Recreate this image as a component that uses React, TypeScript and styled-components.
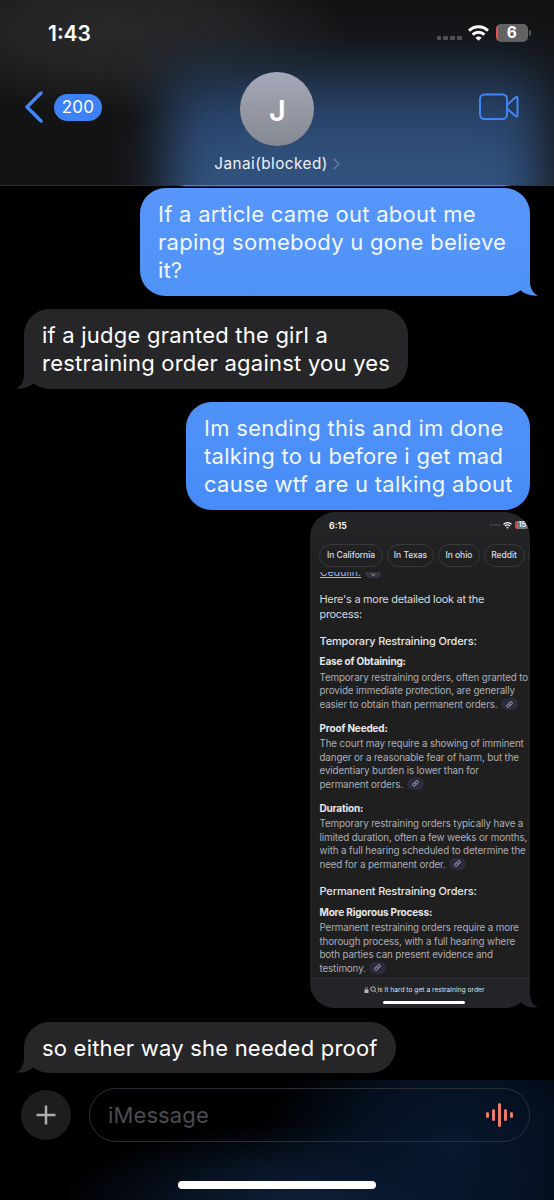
import React from 'react';
import styled, { createGlobalStyle, css } from 'styled-components';

const GlobalStyle = createGlobalStyle`
  * { box-sizing: border-box; }
  body { margin: 0; background: #000; }
`;

const Phone = styled.main`
  width: 554px;
  height: 1200px;
  overflow: hidden;
  display: flex;
  flex-direction: column;
  background: #000;
  color: #fff;
  font-family: Inter, "Liberation Sans", sans-serif;
`;

const Header = styled.header`
  position: relative;
  isolation: isolate;
  flex: none;
  height: 186px;
  overflow: hidden;
  border-bottom: 1px solid;
  border-image: linear-gradient(90deg, #2b2c2e 0 178px, #5286d0 186px 503px, #2b3443 511px) 1;
  background:
    radial-gradient(ellipse 230px 85px at 120px 30px, #29292a 0%, rgba(41, 41, 42, 0.75) 45%, rgba(41, 41, 42, 0) 100%),
    #131314;
`;

const HeaderGlow = styled.div`
  position: absolute;
  z-index: -1;
  left: 166px;
  top: 62px;
  width: 378px;
  height: 240px;
  background: linear-gradient(#1b2a3d, #263f61 16%, #2e4c78 32%, #33547f 50%, #345588);
  filter: blur(26px);
`;

const StatusBar = styled.div`
  display: flex;
  align-items: center;
  justify-content: space-between;
  height: 66px;
  padding: 2px 23px 0 48px;
`;

const Clock = styled.span`
  font-size: 21px;
  font-weight: 600;
  margin-bottom: 1px;
`;

const StatusIcons = styled.div`
  display: flex;
  align-items: center;
  margin-bottom: 2px;
`;

const NavRow = styled.div`
  display: grid;
  grid-template-columns: 1fr auto 1fr;
  height: 119px;
  padding: 0 35px;
`;

const BackButton = styled.div`
  display: flex;
  align-items: center;
  gap: 11px;
  height: 82px;
  margin-left: -10px;
`;

const CountPill = styled.span`
  width: 48px;
  height: 27px;
  border-radius: 14px;
  background: #3c82f6;
  font-size: 17px;
  line-height: 27px;
  text-align: center;
  letter-spacing: 0.2px;
`;

const Contact = styled.div`
  display: flex;
  flex-direction: column;
  align-items: center;
  padding-top: 6px;
`;

const Avatar = styled.div`
  width: 74px;
  height: 74px;
  margin-left: 1px;
  border-radius: 50%;
  background: linear-gradient(#a5a9b8, #868991);
  font-size: 29px;
  font-weight: 600;
  line-height: 77px;
  text-align: center;
`;

const ContactName = styled.div`
  display: flex;
  align-items: center;
  gap: 5px;
  margin-top: 8px;
  font-size: 15.3px;
  line-height: 19px;
  letter-spacing: 0.46px;
  color: #eef2f8;
`;

const VideoButton = styled.div`
  display: flex;
  justify-content: flex-end;
  align-items: center;
  height: 82px;
`;

const Thread = styled.section`
  flex: none;
  height: 894px;
  display: flex;
  flex-direction: column;
  padding: 0 24px;
`;

const PeekEdge = styled.div`
  flex: none;
  width: 322px;
  height: 1px;
  margin: 0 0 1px 159px;
  background: #0a2350;
`;

const Bubble = styled.div<{ $own?: boolean; $width: number; $gap?: number; $from?: string; $to?: string }>`
  position: relative;
  flex: none;
  width: ${(p) => p.$width}px;
  margin-bottom: ${(p) => p.$gap ?? 13.5}px;
  padding: 11.8px 0 11.8px 18px;
  border-radius: 25.5px;
  font-size: 22px;
  line-height: 28px;
  white-space: nowrap;
  ${(p) =>
    p.$own
      ? css`
          align-self: flex-end;
          background: linear-gradient(${p.$from}, ${p.$to});
          color: #f2f7ff;
        `
      : css`
          align-self: flex-start;
          background: #262629;
        `}
`;

const Line = styled.span<{ $track?: number }>`
  display: block;
  letter-spacing: ${(p) => (p.$track === undefined ? 'inherit' : `${p.$track}px`)};
`;

const TailSvg = styled.svg<{ $side: 'left' | 'right' }>`
  position: absolute;
  bottom: 0;
  width: 24px;
  height: 30px;
  ${(p) => (p.$side === 'right' ? 'right: -8px;' : 'left: -8px; transform: scaleX(-1);')}
`;

const Tail = ({ side, color }: { side: 'left' | 'right'; color: string }) => (
  <TailSvg $side={side} viewBox="0 0 24 30">
    <path d="M6 4 L16 4 V15 C16 22 18.5 27 24 29.6 C17 30.2 11 28 7 24.8 L2 20 Z" fill={color} />
  </TailSvg>
);

const Attachment = styled.div`
  position: relative;
  flex: none;
  align-self: flex-end;
  width: 220px;
  height: 496.5px;
  margin-bottom: 13.5px;
`;

const Shot = styled.div`
  display: flex;
  flex-direction: column;
  width: 220px;
  height: 496.5px;
  overflow: hidden;
  border-radius: 25px;
  background: linear-gradient(#242528, #1f1f1f 60px, #1f1f1f);
  white-space: nowrap;
`;

const ShotStatus = styled.div`
  display: flex;
  justify-content: space-between;
  align-items: center;
  flex: none;
  height: 32px;
  padding: 0 2px 5px 19px;
  font-size: 8.8px;
  font-weight: 600;
`;

const ShotStatusIcons = styled.div`
  display: flex;
  align-items: center;
  gap: 3px;
`;

const ShotBattery = styled.span`
  flex: none;
  width: 13px;
  height: 8px;
  border-left: 2px solid #d8433d;
  border-radius: 2px;
  background: #77777a;
  font-size: 7px;
  line-height: 8px;
  text-align: center;
`;

const Chips = styled.div`
  display: flex;
  flex: none;
  gap: 3.7px;
  height: 23px;
  margin-left: 9px;
`;

const Chip = styled.span<{ $width: number }>`
  flex: none;
  width: ${(p) => p.$width}px;
  border: 1px solid #38393c;
  border-radius: 12px;
  font-size: 8.5px;
  font-weight: 500;
  line-height: 21px;
  letter-spacing: -0.04px;
  text-align: center;
  color: #dcdde0;
`;

const CutRow = styled.div`
  display: flex;
  align-items: flex-end;
  flex: none;
  gap: 4px;
  height: 6px;
  margin: 5px 0 0 10px;
  overflow: hidden;
  font-size: 10.3px;
  line-height: 11px;
  color: #a8b9e8;
`;

const CutLink = styled.span`
  text-decoration: underline;
  text-decoration-thickness: 1px;
  letter-spacing: 0.15px;
`;

const CutBadge = styled.span`
  width: 16px;
  height: 11px;
  border-radius: 6px;
  background: #33343f;
  font-size: 7px;
  line-height: 13px;
  text-align: center;
  color: #b8b9c6;
`;

const Article = styled.article`
  flex: none;
  height: 400px;
  padding: 14.5px 0 0 9.5px;
  font-size: 9.8px;
  line-height: 13.45px;
  letter-spacing: -0.13px;
  color: #adaeb8;
`;

const Intro = styled.p`
  margin: 0 0 12.1px;
  font-size: 10.9px;
  line-height: 14.7px;
  letter-spacing: -0.25px;
  color: #d9dadd;
`;

const Title = styled.h2`
  margin: 0 0 6.5px;
  font-size: 11px;
  font-weight: 500;
  line-height: 15px;
  letter-spacing: -0.15px;
  color: #e6e7ea;
`;

const Subtitle = styled.h3`
  margin: 0 0 2.1px;
  font-size: 10px;
  font-weight: 700;
  line-height: 13.4px;
  letter-spacing: -0.17px;
  color: #e8e9ec;
`;

const Paragraph = styled.p<{ $gap?: number }>`
  margin: 0 0 ${(p) => p.$gap ?? 10.6}px;
`;

const LinkBadge = styled.span`
  display: inline-flex;
  align-items: center;
  justify-content: center;
  vertical-align: middle;
  width: 17px;
  height: 12px;
  margin: -2px 0 0 1px;
  border-radius: 6px;
  background: #2c2c3c;
`;

const SearchFooter = styled.div`
  flex: 1;
  display: flex;
  flex-direction: column;
  align-items: center;
  padding-left: 8px;
  border-top: 1px solid #2e2f33;
  background: #232427;
`;

const SearchText = styled.div`
  display: flex;
  align-items: center;
  gap: 1px;
  margin: 5px 0;
  font-size: 6.7px;
  line-height: 12px;
  color: #dfe0e4;
`;

const HomeBar = styled.div<{ $width: number; $height: number }>`
  width: ${(p) => p.$width}px;
  height: ${(p) => p.$height}px;
  border-radius: ${(p) => p.$height / 2}px;
  background: #fff;
`;

const Composer = styled.footer`
  flex: none;
  height: 120px;
  overflow: hidden;
  display: flex;
  flex-direction: column;
  align-items: center;
  background:
    radial-gradient(ellipse 190px 140px at 455px 60px, rgba(8, 26, 52, 0.9) 0%, rgba(7, 22, 44, 0.7) 50%, rgba(0, 0, 0, 0) 100%),
    radial-gradient(ellipse 270px 85px at 330px 125px, #11233f 0%, rgba(12, 28, 52, 0.7) 50%, rgba(0, 0, 0, 0) 100%),
    #000;
`;

const InputRow = styled.div`
  display: flex;
  align-items: center;
  gap: 18px;
  width: 100%;
  padding: 8px 24px 0 21px;
`;

const PlusButton = styled.div`
  display: flex;
  align-items: center;
  justify-content: center;
  width: 50px;
  height: 50px;
  border-radius: 50%;
  background: #1d1d1f;
`;

const InputBox = styled.div`
  flex: 1;
  display: flex;
  align-items: center;
  justify-content: space-between;
  height: 54px;
  padding: 0 16px 0 18px;
  border: 1px solid #2a2f36;
  border-radius: 27px;
  font-size: 22px;
  letter-spacing: 0.12px;
  color: #4b4c50;
`;

const HomeSlot = styled.div`
  margin-top: 39px;
`;

const LinkIcon = () => (
  <svg width="7" height="7" viewBox="0 0 24 24" fill="none" stroke="#b4b5c6" strokeWidth="3" strokeLinecap="round">
    <path d="M10 13a5 5 0 0 0 7.5.5l3-3a5 5 0 0 0-7-7l-1.7 1.7" />
    <path d="M14 11a5 5 0 0 0-7.5-.5l-3 3a5 5 0 0 0 7 7l1.7-1.7" />
  </svg>
);

const Badge = () => (
  <LinkBadge>
    <LinkIcon />
  </LinkBadge>
);

const Wifi = ({ width }: { width: number }) => (
  <svg width={width} height={width * 0.76} viewBox="0 0 21 16" fill="none" stroke="#fff" strokeWidth="3">
    <path d="M1 5.6 C6.5 0.4 14.5 0.4 20 5.6" />
    <path d="M4.6 9.6 C8 6.5 13 6.5 16.4 9.6" />
    <path d="M10.5 15.8 L7.4 12.8 C9.2 11.2 11.8 11.2 13.6 12.8 Z" fill="#fff" stroke="none" />
  </svg>
);

const SignalDots = styled.div<{ $size: number; $space: number }>`
  display: flex;
  gap: ${(p) => p.$space}px;
  i {
    width: ${(p) => p.$size}px;
    height: ${(p) => p.$size}px;
    border-radius: 1px;
    background: #505154;
  }
`;

const MainDots = styled(SignalDots)`
  margin: 10px 6px 0 0;
`;

const Dots = () => (
  <>
    <i />
    <i />
    <i />
    <i />
  </>
);

const Battery = styled.div`
  position: relative;
  width: 32.5px;
  height: 18px;
  margin: 0 3px 0 7px;
  border-radius: 5px;
  background: linear-gradient(90deg, #e8504c 2.5px, #626265 2.5px);
  font-size: 15.5px;
  font-weight: 700;
  line-height: 18.5px;
  text-align: center;
  &::after {
    content: '';
    position: absolute;
    right: -3px;
    top: 6px;
    width: 2px;
    height: 6px;
    border-radius: 0 2px 2px 0;
    background: #55565a;
  }
`;

export default function App() {
  return (
    <Phone>
      <GlobalStyle />
      <Header>
        <HeaderGlow />
        <StatusBar>
          <Clock>1:43</Clock>
          <StatusIcons>
            <MainDots $size={4.6} $space={2.2}>
              <Dots />
            </MainDots>
            <Wifi width={21} />
            <Battery>6</Battery>
          </StatusIcons>
        </StatusBar>
        <NavRow>
          <BackButton>
            <svg width="18" height="32" viewBox="0 0 18 32" fill="none" stroke="#4187f5" strokeWidth="3.5" strokeLinecap="round" strokeLinejoin="round">
              <path d="M16 2 L2 16 L16 30" />
            </svg>
            <CountPill>200</CountPill>
          </BackButton>
          <Contact>
            <Avatar>J</Avatar>
            <ContactName>
              Janai(blocked)
              <svg width="7" height="12" viewBox="0 0 7 12" fill="none" stroke="#65799a" strokeWidth="1.5">
                <path d="M1 1 L6 6 L1 11" />
              </svg>
            </ContactName>
          </Contact>
          <VideoButton>
            <svg width="40" height="28" viewBox="0 0 40 28" fill="none" stroke="#4285f4" strokeWidth="2" strokeLinejoin="round">
              <rect x="1" y="1.5" width="27" height="24.5" rx="4.5" />
              <path d="M28.5 11.8 L36.3 4.6 Q38.5 3 38.5 5.5 V22 Q38.5 24.5 36.3 22.9 L28.5 16" />
            </svg>
          </VideoButton>
        </NavRow>
      </Header>

      <Thread>
        <PeekEdge />
        <Bubble $own $width={390} $from="#5796fa" $to="#4f93f7">
          <Line $track={0.27}>If a article came out about me</Line>
          <Line $track={0.28}>raping somebody u gone believe</Line>
          <Line $track={0.1}>it?</Line>
          <Tail side="right" color="#4f93f7" />
        </Bubble>
        <Bubble $width={384}>
          <Line $track={0.22}>if a judge granted the girl a</Line>
          <Line $track={0.23}>restraining order against you yes</Line>
          <Tail side="left" color="#262629" />
        </Bubble>
        <Bubble $own $width={344} $gap={2} $from="#4f92f8" $to="#478bf8">
          <Line $track={0.29}>Im sending this and im done</Line>
          <Line $track={0.29}>talking to u before i get mad</Line>
          <Line $track={0.28}>cause wtf are u talking about</Line>
        </Bubble>
        <Attachment>
          <Tail side="right" color="#232427" />
          <Shot>
            <ShotStatus>
              6:15
              <ShotStatusIcons>
                <SignalDots $size={1.8} $space={1}>
                  <Dots />
                </SignalDots>
                <Wifi width={9} />
                <ShotBattery>15</ShotBattery>
              </ShotStatusIcons>
            </ShotStatus>
            <Chips>
              <Chip $width={64}>In California</Chip>
              <Chip $width={47.5}>In Texas</Chip>
              <Chip $width={42}>In ohio</Chip>
              <Chip $width={41}>Reddit</Chip>
              <Chip $width={41} />
            </Chips>
            <CutRow>
              <CutLink>Cedulin.</CutLink>
              <CutBadge>⌄</CutBadge>
            </CutRow>
            <Article>
              <Intro>
                <Line>Here's a more detailed look at the</Line>
                <Line>process:</Line>
              </Intro>
              <Title>Temporary Restraining Orders:</Title>
              <Subtitle>Ease of Obtaining:</Subtitle>
              <Paragraph>
                <Line>Temporary restraining orders, often granted to</Line>
                <Line>provide immediate protection, are generally</Line>
                <Line>easier to obtain than permanent orders. <Badge /></Line>
              </Paragraph>
              <Subtitle>Proof Needed:</Subtitle>
              <Paragraph>
                <Line>The court may require a showing of imminent</Line>
                <Line>danger or a reasonable fear of harm, but the</Line>
                <Line>evidentiary burden is lower than for</Line>
                <Line>permanent orders. <Badge /></Line>
              </Paragraph>
              <Subtitle>Duration:</Subtitle>
              <Paragraph $gap={13.3}>
                <Line>Temporary restraining orders typically have a</Line>
                <Line>limited duration, often a few weeks or months,</Line>
                <Line>with a full hearing scheduled to determine the</Line>
                <Line>need for a permanent order. <Badge /></Line>
              </Paragraph>
              <Title>Permanent Restraining Orders:</Title>
              <Subtitle>More Rigorous Process:</Subtitle>
              <Paragraph>
                <Line>Permanent restraining orders require a more</Line>
                <Line>thorough process, with a full hearing where</Line>
                <Line>both parties can present evidence and</Line>
                <Line>testimony. <Badge /></Line>
              </Paragraph>
            </Article>
            <SearchFooter>
              <SearchText>
                <svg width="5" height="6" viewBox="0 0 10 12">
                  <rect x="1" y="5" width="8" height="7" rx="1" fill="#b9bac0" />
                  <path d="M3 5 V3 a2 2 0 0 1 4 0 V5" fill="none" stroke="#b9bac0" strokeWidth="1.5" />
                </svg>
                <svg width="7" height="7" viewBox="0 0 14 14" fill="none" stroke="#dfe0e4" strokeWidth="1.6">
                  <circle cx="6" cy="6" r="4.5" />
                  <path d="M9.5 9.5 L13 13" />
                </svg>
                is it hard to get a restraining order
              </SearchText>
              <HomeBar $width={82} $height={3} />
            </SearchFooter>
          </Shot>
        </Attachment>
        <Bubble $width={372}>
          <Line $track={0.21}>so either way she needed proof</Line>
          <Tail side="left" color="#262629" />
        </Bubble>
      </Thread>

      <Composer>
        <InputRow>
          <PlusButton>
            <svg width="20" height="20" viewBox="0 0 20 20" stroke="#aeaeb2" strokeWidth="2.5">
              <path d="M10 0.5 V19.5 M0.5 10 H19.5" />
            </svg>
          </PlusButton>
          <InputBox>
            iMessage
            <svg width="27" height="24" viewBox="0 0 27 24" stroke="#ee7a68" strokeWidth="3" strokeLinecap="round">
              <path d="M1.5 10.5 V13.5 M7.5 7.5 V16.5 M13.5 1.5 V22.5 M19.5 7.5 V16.5 M25.5 10.5 V13.5" />
            </svg>
          </InputBox>
        </InputRow>
        <HomeSlot>
          <HomeBar $width={198} $height={8} />
        </HomeSlot>
      </Composer>
    </Phone>
  );
}
